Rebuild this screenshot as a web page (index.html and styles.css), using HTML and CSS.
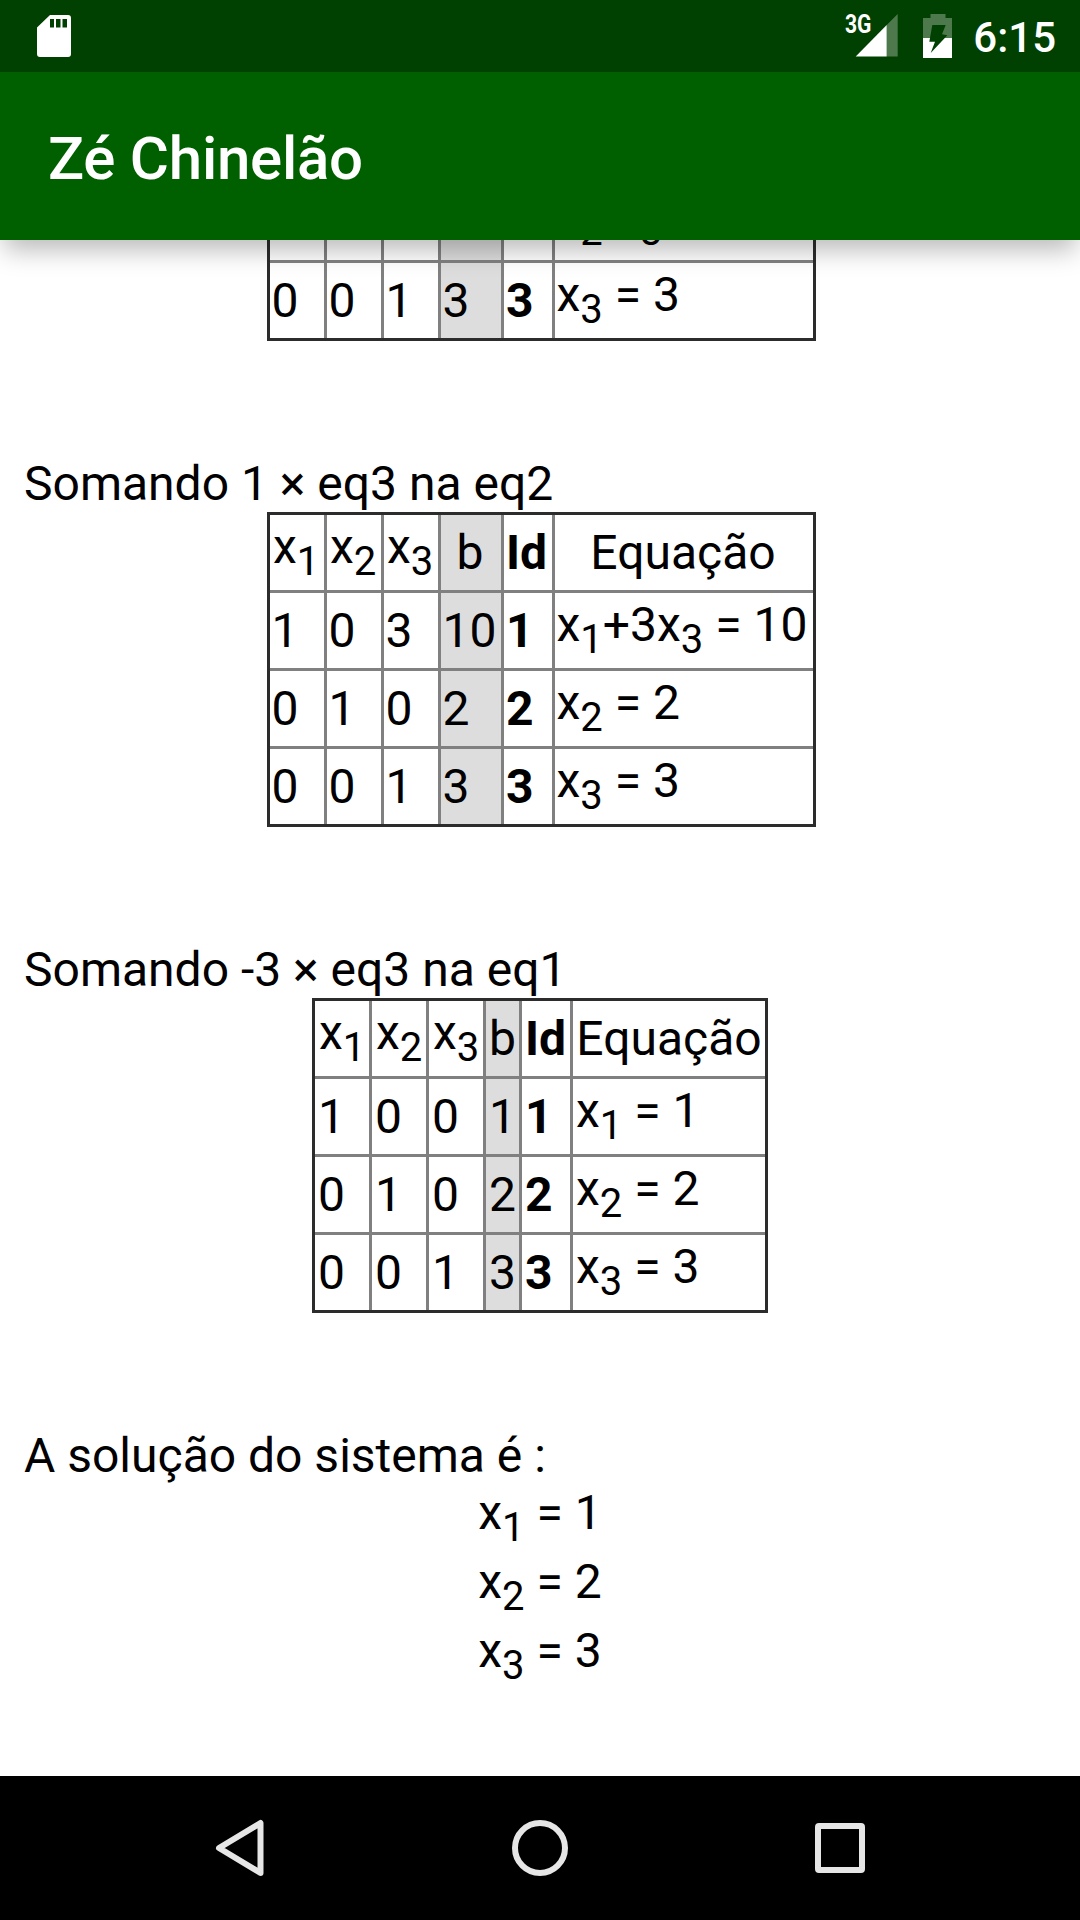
FILE: index.html
```html
<!DOCTYPE html>
<html lang="pt-BR">
<head>
<meta charset="utf-8">
<title>Zé Chinelão</title>
<link rel="stylesheet" href="styles.css">
</head>
<body>
<div class="screen">
  <header class="top">
    <div class="status">
      <svg class="sd" width="34" height="42" viewBox="0 0 34 42"><path fill="#fff" fill-rule="evenodd" d="M13 0H31Q34 0 34 3V39Q34 42 31 42H3Q0 42 0 39V12.500ZM13 4V12.500H17V4ZM19 4V12.500H23.500V4ZM25.500 4V12.500H30V4Z"/></svg>
      <div class="indicators">
        <svg class="signal" width="53" height="43" viewBox="0 0 53 43"><path fill="#fff" fill-opacity=".3" d="M52.700 0V42.500H41.700V11Z"/><path fill="#fff" d="M41.700 11V42.500H10.700Z"/><text class="net" x="0" y="19.400" textLength="26.500" lengthAdjust="spacingAndGlyphs">3G</text></svg>
        <svg class="battery" width="29" height="44" viewBox="0 0 29 44"><path fill="#fff" fill-opacity=".3" d="M7.500 0H22.500V4H29V24H21.800L24.300 21.300L19 20.300L22.700 11H9.300L7 24H0V4H7.500Z"/><path fill="#fff" d="M0 24H7L6.300 27.700H12L7.700 39L21.800 24H29V44H0Z"/></svg>
        <span class="clock">6:15</span>
      </div>
    </div>
    <h1 class="title">Zé Chinelão</h1>
  </header>
  <main class="content">
    <table class="grid wide">
      <colgroup><col class="x"><col class="x"><col class="x"><col class="b"><col class="id"><col></colgroup>
      <tr><td>0</td><td>1</td><td>-1</td><td>-1</td><th>2</th><td class="eq">x<sub>2</sub>-x<sub>3</sub> = -1</td></tr>
      <tr><td>0</td><td>0</td><td>1</td><td>3</td><th>3</th><td class="eq">x<sub>3</sub> = 3</td></tr>
    </table>
    <p class="step">Somando 1 × eq3 na eq2</p>
    <table class="grid wide">
      <colgroup><col class="x"><col class="x"><col class="x"><col class="b"><col class="id"><col></colgroup>
      <tr><td class="eq var">x<sub>1</sub></td><td class="eq var">x<sub>2</sub></td><td class="eq var">x<sub>3</sub></td><td class="head">b</td><th>Id</th><td class="head">Equação</td></tr>
      <tr><td>1</td><td>0</td><td>3</td><td>10</td><th>1</th><td class="eq">x<sub>1</sub>+3x<sub>3</sub> = 10</td></tr>
      <tr><td>0</td><td>1</td><td>0</td><td>2</td><th>2</th><td class="eq">x<sub>2</sub> = 2</td></tr>
      <tr><td>0</td><td>0</td><td>1</td><td>3</td><th>3</th><td class="eq">x<sub>3</sub> = 3</td></tr>
    </table>
    <p class="step">Somando -3 × eq3 na eq1</p>
    <table class="grid narrow">
      <colgroup><col class="x"><col class="x"><col class="x"><col class="b"><col class="id"><col></colgroup>
      <tr><td class="eq var">x<sub>1</sub></td><td class="eq var">x<sub>2</sub></td><td class="eq var">x<sub>3</sub></td><td class="head">b</td><th>Id</th><td class="head">Equação</td></tr>
      <tr><td>1</td><td>0</td><td>0</td><td>1</td><th>1</th><td class="eq">x<sub>1</sub> = 1</td></tr>
      <tr><td>0</td><td>1</td><td>0</td><td>2</td><th>2</th><td class="eq">x<sub>2</sub> = 2</td></tr>
      <tr><td>0</td><td>0</td><td>1</td><td>3</td><th>3</th><td class="eq">x<sub>3</sub> = 3</td></tr>
    </table>
    <p class="step">A solução do sistema é :</p>
    <div class="solution">
      <p>x<sub>1</sub> = 1</p>
      <p>x<sub>2</sub> = 2</p>
      <p>x<sub>3</sub> = 3</p>
    </div>
  </main>
  <nav class="nav">
    <svg width="50" height="58" viewBox="0 0 50 58"><path d="M45.500 4V54L4 29Z"/></svg>
    <svg width="56" height="56" viewBox="0 0 56 56"><circle cx="28" cy="28" r="25"/></svg>
    <svg width="50" height="50" viewBox="0 0 50 50"><rect x="3" y="3" width="44" height="44" rx="1"/></svg>
  </nav>
</div>
</body>
</html>
```
FILE: styles.css
```css
* { box-sizing: border-box; }
body { margin: 0; background: #fff; font-family: Roboto, sans-serif; color: #000; }
p, h1 { margin: 0; }
svg { display: block; }

.screen { width: 1080px; height: 1920px; display: flex; flex-direction: column; overflow: hidden; }

.top { position: relative; height: 240px; flex: none; background: #006000; color: #fff; box-shadow: 0 14px 24px -4px rgba(0, 0, 0, .27); }
.status { height: 72px; background: #004000; display: flex; justify-content: space-between; align-items: flex-start; padding: 0 24px 0 37px; }
.sd { margin-top: 15px; }
.indicators { display: flex; align-items: flex-start; padding-top: 14px; }
.signal { overflow: visible; margin-right: 25px; }
.net { font: 700 25px Roboto, sans-serif; fill: #fff; }
.battery { margin-right: 21px; }
.clock { font-size: 42px; font-weight: 500; line-height: 48px; }
.title { font-size: 60px; font-weight: 500; line-height: 70px; padding: 52px 0 0 48px; letter-spacing: -.25px; }

.content { flex: 1; min-height: 0; overflow: hidden; display: flex; flex-direction: column; justify-content: flex-end; padding: 0 24px 85px; font-size: 48px; line-height: 57px; }
.content > * { flex: none; }

.grid { table-layout: fixed; border-collapse: separate; border-spacing: 0; border: 3px solid #2c2c2c; margin-bottom: 114px; }
.wide { width: 549px; margin-left: 243px; }
.narrow { width: 456px; margin-left: 288px; }
.x { width: 57px; }
.wide .b { width: 63px; }
.narrow .b { width: 36px; }
.b { background: #ddd; }
.id { width: 51px; }
.grid td, .grid th { height: 78px; padding: 0 0 0 1.5px; text-align: left; vertical-align: middle; white-space: nowrap; border-right: 3px solid #808080; border-bottom: 3px solid #808080; }
.narrow td, .narrow th { padding-left: 3px; }
.grid tr:last-child > * { height: 75px; border-bottom: 0; }
.grid tr > :last-child { border-right: 0; }
.grid .eq { padding-bottom: 12px; }
.wide .eq { padding-left: 1.5px; }
.wide th { padding-left: 2px; }
.wide .var { padding-left: 3px; }
.narrow .var { padding-left: 4px; }
.grid .head { text-align: center; padding: 0; }
.wide .head { padding-right: 2px; }

sub { font-size: 40px; line-height: 0; vertical-align: -12px; }

.solution { text-align: center; }
.solution p { padding-bottom: 12px; }

.nav { flex: none; height: 144px; background: #000; display: grid; grid-template-columns: 300px 300px 300px; justify-content: center; justify-items: center; align-items: center; }
.nav svg { fill: none; stroke: #e6e6e6; stroke-width: 6; stroke-linejoin: round; }
```
